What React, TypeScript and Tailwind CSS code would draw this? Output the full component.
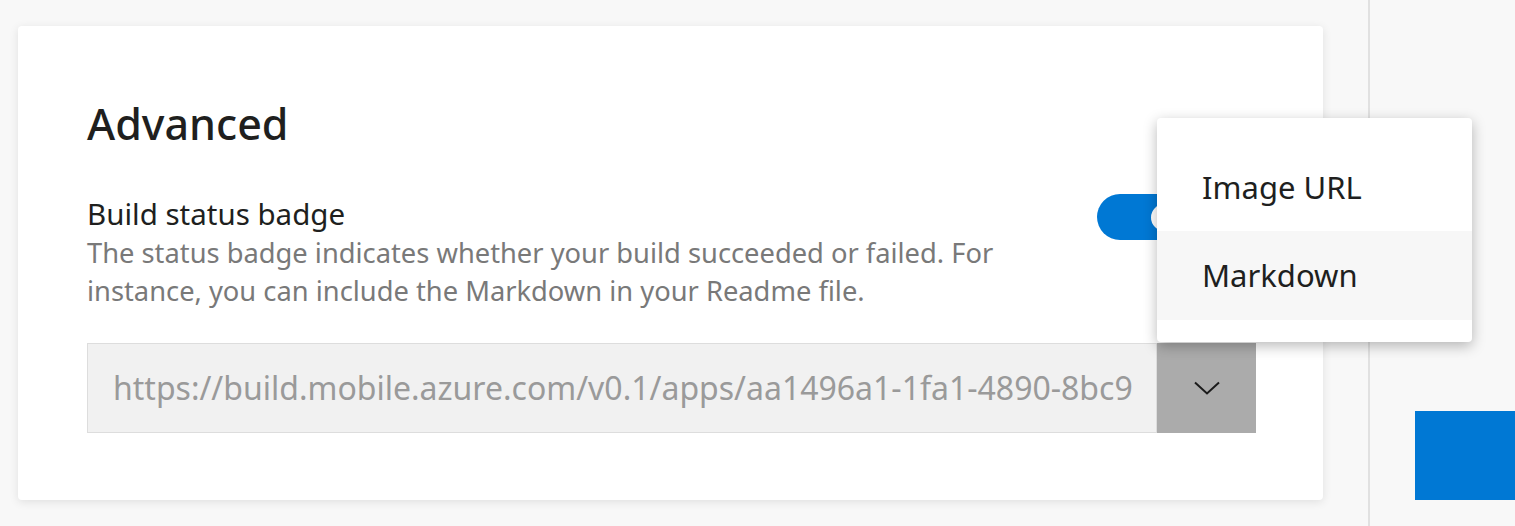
const font = { fontFamily: '"Noto Sans", "Open Sans", sans-serif' };

export default function App() {
  return (
    <div
      className="relative flex h-[526px] w-[1515px] overflow-hidden bg-[#f8f8f8]"
      style={font}
    >
      <div className="w-[1368px] shrink-0 pl-[18px] pt-[26px]">
        <div className="h-[474px] w-[1305px] rounded-[4px] bg-white pl-[69px] pr-[67px] shadow-[0_2px_10px_rgba(0,0,0,0.10)]">
          <h2 className="pt-[68px] text-[43px] font-medium leading-[60px] text-[#201f1e]">
            Advanced
          </h2>

          <div className="mt-[40px] flex items-start">
            <div className="flex-1">
              <div className="text-[29.5px] leading-[40px] text-[#201f1e]">Build status badge</div>
              <p className="text-[27.3px] leading-[38px] text-[#797979]">
                The status badge indicates whether your build succeeded or failed. For
                <br />
                instance, you can include the Markdown in your Readme file.
              </p>
            </div>
            <div className="mr-[69px] flex h-[46px] w-[90px] items-center justify-end rounded-full bg-[#0078d4] pr-[9px]">
              <div className="h-[27px] w-[27px] rounded-full bg-white" />
            </div>
          </div>

          <div className="mt-[33px] flex h-[90px]">
            <div className="flex flex-1 items-center overflow-hidden whitespace-nowrap border border-[#dddddd] bg-[#f1f1f1] pl-[25px] pr-[26px] text-[32px] text-[#9a9a9a]">
              https://build.mobile.azure.com/v0.1/apps/aa1496a1-1fa1-4890-8bc9
            </div>
            <button className="flex w-[99px] items-center justify-center bg-[#ababab]">
              <svg width="26" height="14" viewBox="0 0 26 14" fill="none">
                <path d="M1 1.5 L13 12.5 L25 1.5" stroke="#1b1b1b" strokeWidth="2" />
              </svg>
            </button>
          </div>
        </div>
      </div>

      <div className="h-full w-[2px] shrink-0 bg-[#e1e1e1]" />

      <div className="flex-1 pl-[45px] pt-[411px]">
        <div className="h-[89px] w-[100px] bg-[#0078d4]" />
      </div>

      <div className="absolute left-[1157px] top-[118px] w-[315px] rounded-[4px] bg-white pb-[22px] pt-[25px] shadow-[0_4px_14px_rgba(0,0,0,0.28)]">
        <div className="flex h-[88px] items-center pl-[45px] text-[31px] text-[#201f1e]">Image URL</div>
        <div className="flex h-[89px] items-center bg-[#f7f7f7] pl-[45px] text-[31px] text-[#201f1e]">Markdown</div>
      </div>
    </div>
  );
}
